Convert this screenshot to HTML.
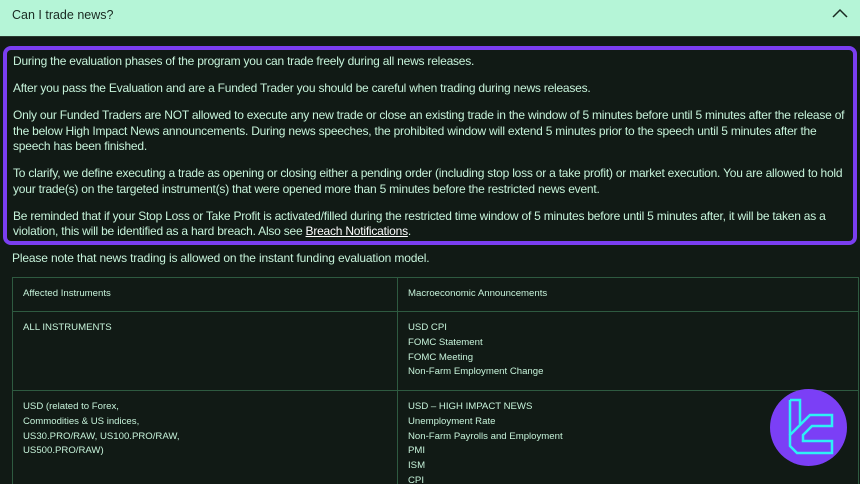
<!DOCTYPE html>
<html><head><style>
*{margin:0;padding:0;box-sizing:border-box}
html,body{width:860px;height:484px;overflow:hidden}
body{background:#111a15;font-family:"Liberation Sans",sans-serif;color:#c6f3da;position:relative}
.hdr{height:37px;background:#b5f5d7;color:#1a2a22;font-size:12.5px;padding:0 12px;line-height:30px;position:relative;border-bottom:1px solid #2a3a30}
.hdr svg{position:absolute;right:12px;top:8px}
.box{position:absolute;left:3px;top:46px;width:854px;height:199px;border:4px solid #7a3ef0;border-radius:8px;padding:4px 2px 0 6px;font-size:12px;letter-spacing:-0.22px;line-height:15.6px}
.box p{margin-bottom:11.4px}
.box a{color:#fff;text-decoration:underline}
.note{position:absolute;left:12px;top:251px;font-size:12px;letter-spacing:-0.15px}
table{position:absolute;left:12px;top:277px;width:847px;border-collapse:collapse;font-size:9.6px;line-height:14.8px}
td{border:1px solid #2e5a40;vertical-align:top;padding:9px 10px}
td:first-child{width:385px}
.logo{position:absolute;left:770px;top:389px;width:77px;height:77px;border-radius:50%;background:#7b3ff6}
</style></head><body>
<div class="hdr">Can I trade news?<svg width="16" height="10" viewBox="0 0 16 10"><path d="M1 9 L8 2 L15 9" fill="none" stroke="#1a2a22" stroke-width="1.5"/></svg></div>
<div class="box">
<p>During the evaluation phases of the program you can trade freely during all news releases.</p>
<p>After you pass the Evaluation and are a Funded Trader you should be careful when trading during news releases.</p>
<p>Only our Funded Traders are NOT allowed to execute any new trade or close an existing trade in the window of 5 minutes before until 5 minutes after the release of the below High Impact News announcements. During news speeches, the prohibited window will extend 5 minutes prior to the speech until 5 minutes after the speech has been finished.</p>
<p>To clarify, we define executing a trade as opening or closing either a pending order (including stop loss or a take profit) or market execution. You are allowed to hold your trade(s) on the targeted instrument(s) that were opened more than 5 minutes before the restricted news event.</p>
<p>Be reminded that if your Stop Loss or Take Profit is activated/filled during the restricted time window of 5 minutes before until 5 minutes after, it will be taken as a violation, this will be identified as a hard breach. Also see <a>Breach Notifications</a>.</p>
</div>
<div class="note">Please note that news trading is allowed on the instant funding evaluation model.</div>
<table>
<tr style="height:34px"><td>Affected Instruments</td><td>Macroeconomic Announcements</td></tr>
<tr style="height:79px"><td>ALL INSTRUMENTS</td><td>USD CPI<br>FOMC Statement<br>FOMC Meeting<br>Non-Farm Employment Change</td></tr>
<tr><td>USD (related to Forex,<br>Commodities &amp; US indices,<br>US30.PRO/RAW, US100.PRO/RAW,<br>US500.PRO/RAW)</td><td>USD – HIGH IMPACT NEWS<br>Unemployment Rate<br>Non-Farm Payrolls and Employment<br>PMI<br>ISM<br>CPI</td></tr>
</table>
<div class="logo"><svg width="77" height="77" viewBox="0 0 77 77"><path d="M20 11 H30 V36 L20 46 V57 L27 64 H62 V52 L33 52 V46 L42 37 H62 V26 H40 L30 36" fill="none" stroke="#2ef0f5" stroke-width="2.5"/><path d="M20 11 V46" stroke="#2ef0f5" stroke-width="2.5"/></svg></div>
</body></html>
